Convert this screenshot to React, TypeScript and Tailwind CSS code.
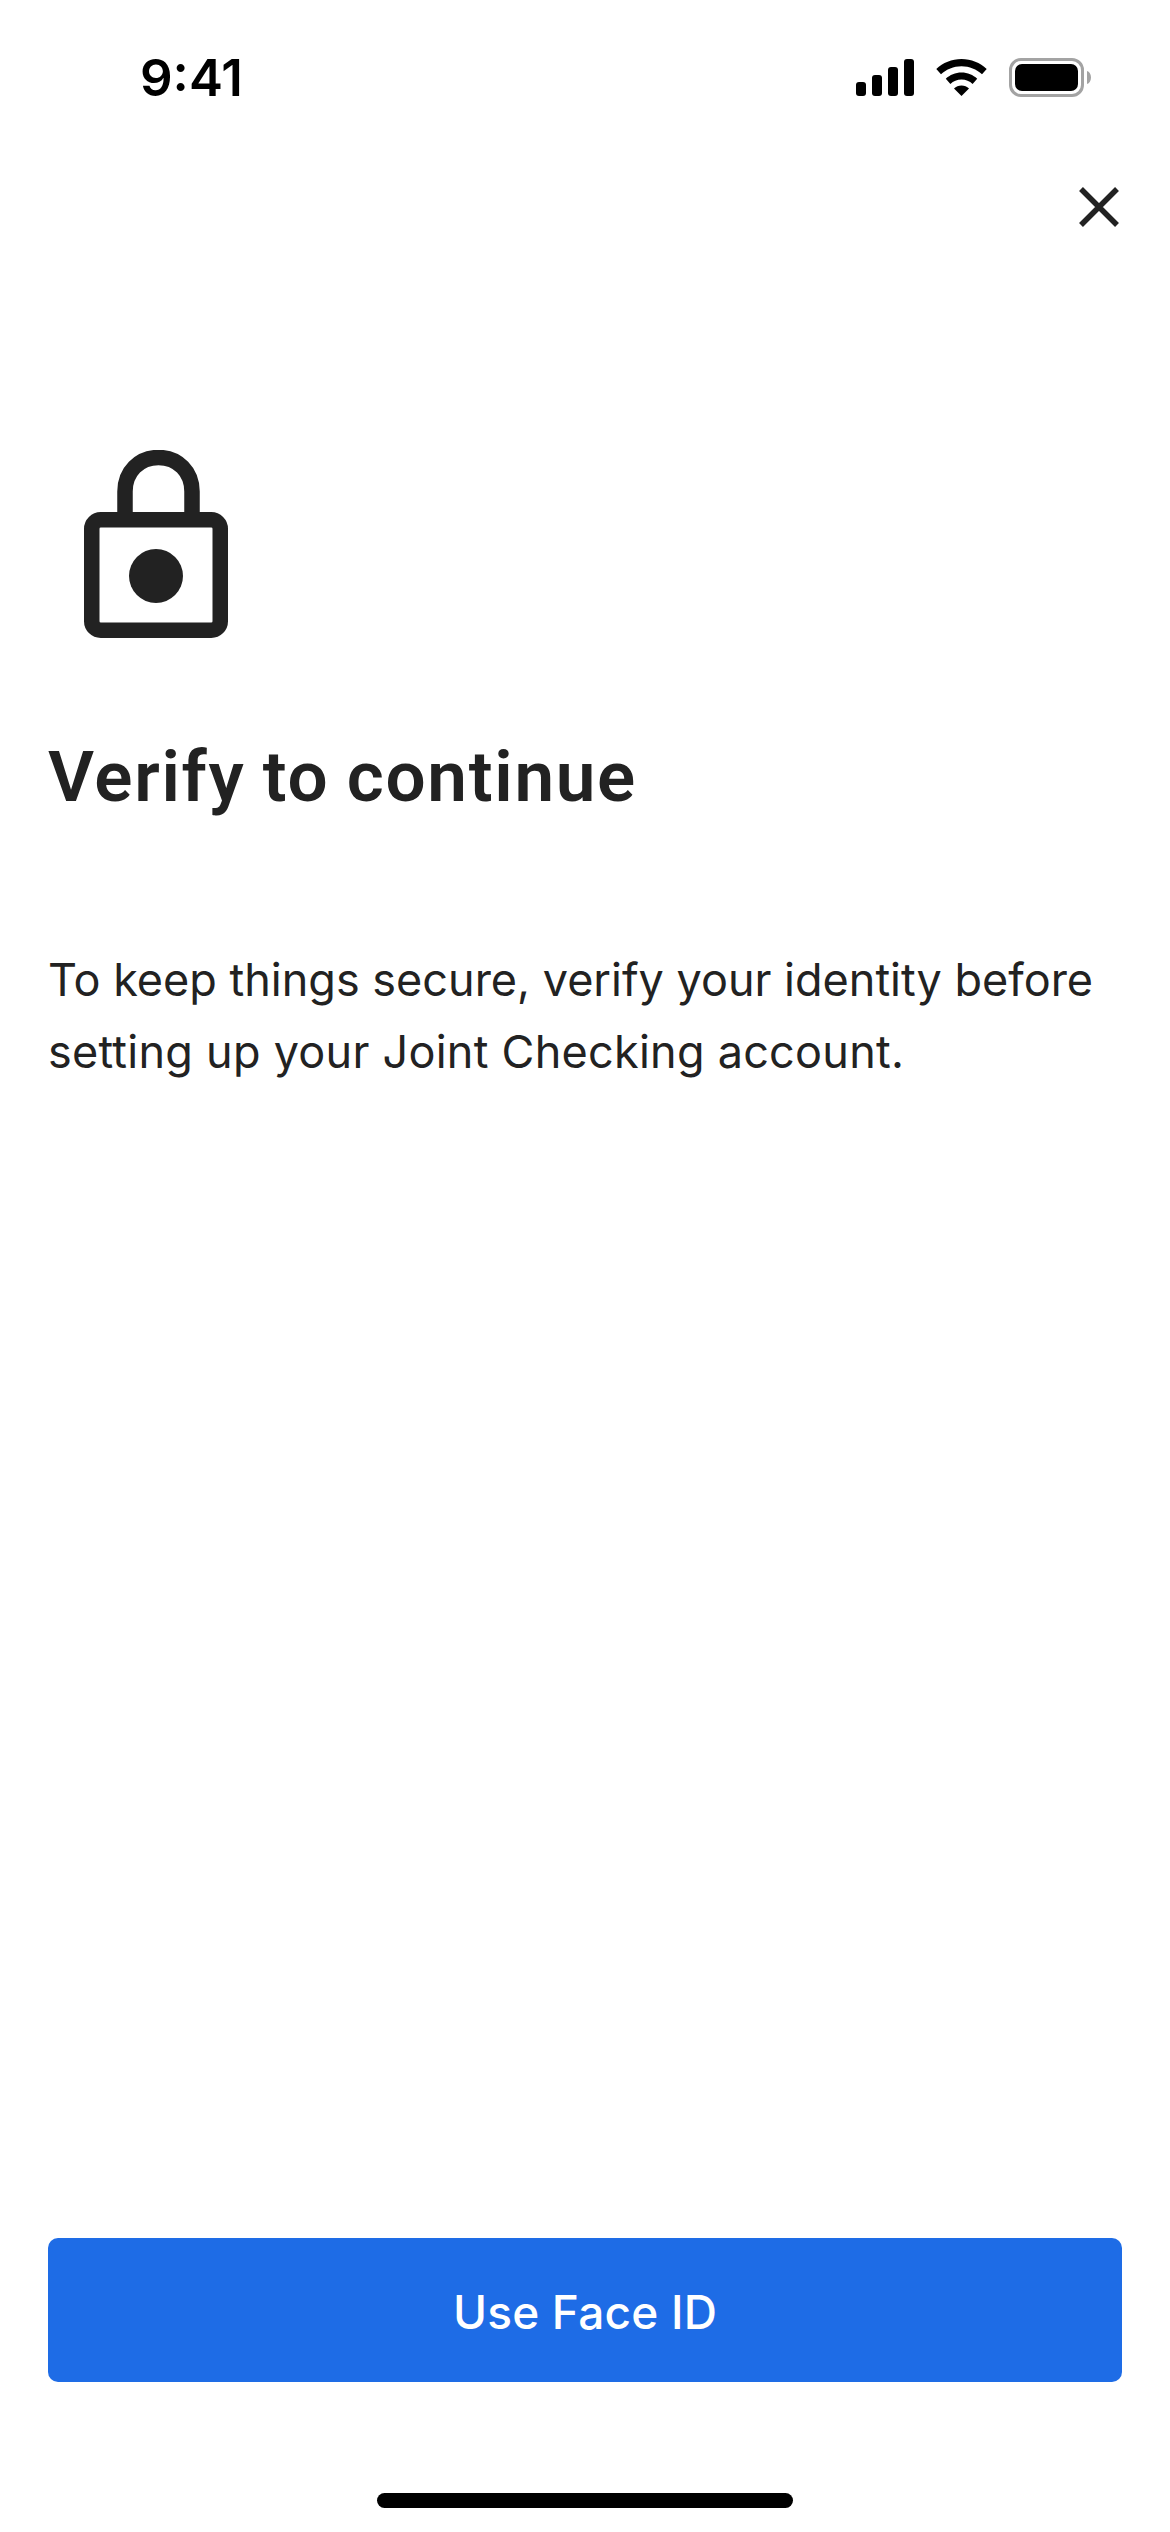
function SignalIcon() {
  return (
    <svg width="58" height="37" viewBox="0 0 58 37" fill="#000">
      <rect x="0" y="23" width="10" height="14" rx="3" />
      <rect x="16" y="16" width="10" height="21" rx="3" />
      <rect x="32" y="8" width="10" height="29" rx="3" />
      <rect x="48" y="0" width="10" height="37" rx="3" />
    </svg>
  )
}

function WifiIcon() {
  return (
    <svg width="51" height="37" viewBox="0 0 51 37" fill="#000">
      <path d="M25.5 0C35.2 0 44.1 3.8 50.7 10L46 15.3C40.6 10.3 33.4 7.2 25.5 7.2S10.4 10.3 5 15.3L.3 10C6.9 3.8 15.8 0 25.5 0Z" />
      <path d="M25.5 13.5C31.6 13.5 37.1 15.9 41.2 19.7L36.6 24.9C33.7 22.2 29.8 20.6 25.5 20.6S17.3 22.2 14.4 24.9L9.8 19.7C13.9 15.9 19.4 13.5 25.5 13.5Z" />
      <path d="M25.5 26.5C28.4 26.5 31 27.6 33 29.4L25.5 37L18 29.4C20 27.6 22.6 26.5 25.5 26.5Z" />
    </svg>
  )
}

function BatteryIcon() {
  return (
    <div className="flex items-center">
      <div className="w-[75px] h-[39px] rounded-[12px] border-[3px] border-[#a3a3a3] p-[3px]">
        <div className="w-full h-full rounded-[7px] bg-black" />
      </div>
      <svg className="ml-[3px]" width="4" height="13" viewBox="0 0 4 13" fill="#a3a3a3">
        <path d="M0 0C2.4 .6 4 3.3 4 6.5S2.4 12.400 0 13Z" />
      </svg>
    </div>
  )
}

function CloseIcon() {
  return (
    <svg width="42" height="42" viewBox="0 0 42 42" fill="none" stroke="#222222" strokeWidth="5.500">
      <path d="M3 3L39 39M39 3L3 39" />
    </svg>
  )
}

function LockIcon() {
  return (
    <svg width="144" height="188" viewBox="0 0 144 188" fill="none">
      <path d="M41 70V41.500C41 22 55 7.500 74.500 7.500S108 22 108 41.500V70" stroke="#222222" strokeWidth="15.500" />
      <rect x="7.750" y="69.750" width="128.500" height="110.500" rx="9" stroke="#222222" strokeWidth="15.500" />
      <circle cx="72" cy="126" r="27" fill="#222222" />
    </svg>
  )
}

export default function App() {
  return (
    <div className="w-[1170px] h-[2532px] flex flex-col bg-white font-['Inter',sans-serif] text-[#222222]">
      {/* Status bar */}
      <div className="h-[156px] pt-[58px] pl-[140px] pr-[79px] flex items-start justify-between">
        <span className="text-[51px] leading-[40px] font-semibold text-black">9:41</span>
        <div className="flex items-center gap-[22px]">
          <SignalIcon />
          <WifiIcon />
          <BatteryIcon />
        </div>
      </div>

      {/* Close */}
      <div className="flex justify-end pt-[30px] pr-[50px]">
        <CloseIcon />
      </div>

      <div className="pl-[84px] mt-[222px]">
        <LockIcon />
      </div>

      <h1 className="mt-[99px] pl-[48px] text-[71px] leading-[80px] font-semibold tracking-[1.7px] [word-spacing:-2px] font-['Roboto',sans-serif]">
        Verify to continue
      </h1>

      <p className="mt-[127px] pl-[48px] text-[45px] leading-[72px]">
        To keep things secure, verify your identity before
        <br />
        <span className="tracking-[0.25px]">setting up your Joint Checking account.</span>
      </p>

      <div className="flex-1" />

      {/* Action */}
      <div className="px-[48px]">
        <button className="w-full h-[144px] pt-[4px] rounded-[10px] bg-[#1e6ce6] text-white text-[46px] font-medium tracking-[0.2px]">
          Use Face ID
        </button>
      </div>

      <div className="h-[150px] flex items-start justify-center pt-[111px]">
        <div className="w-[416px] h-[15px] rounded-full bg-black" />
      </div>
    </div>
  )
}
